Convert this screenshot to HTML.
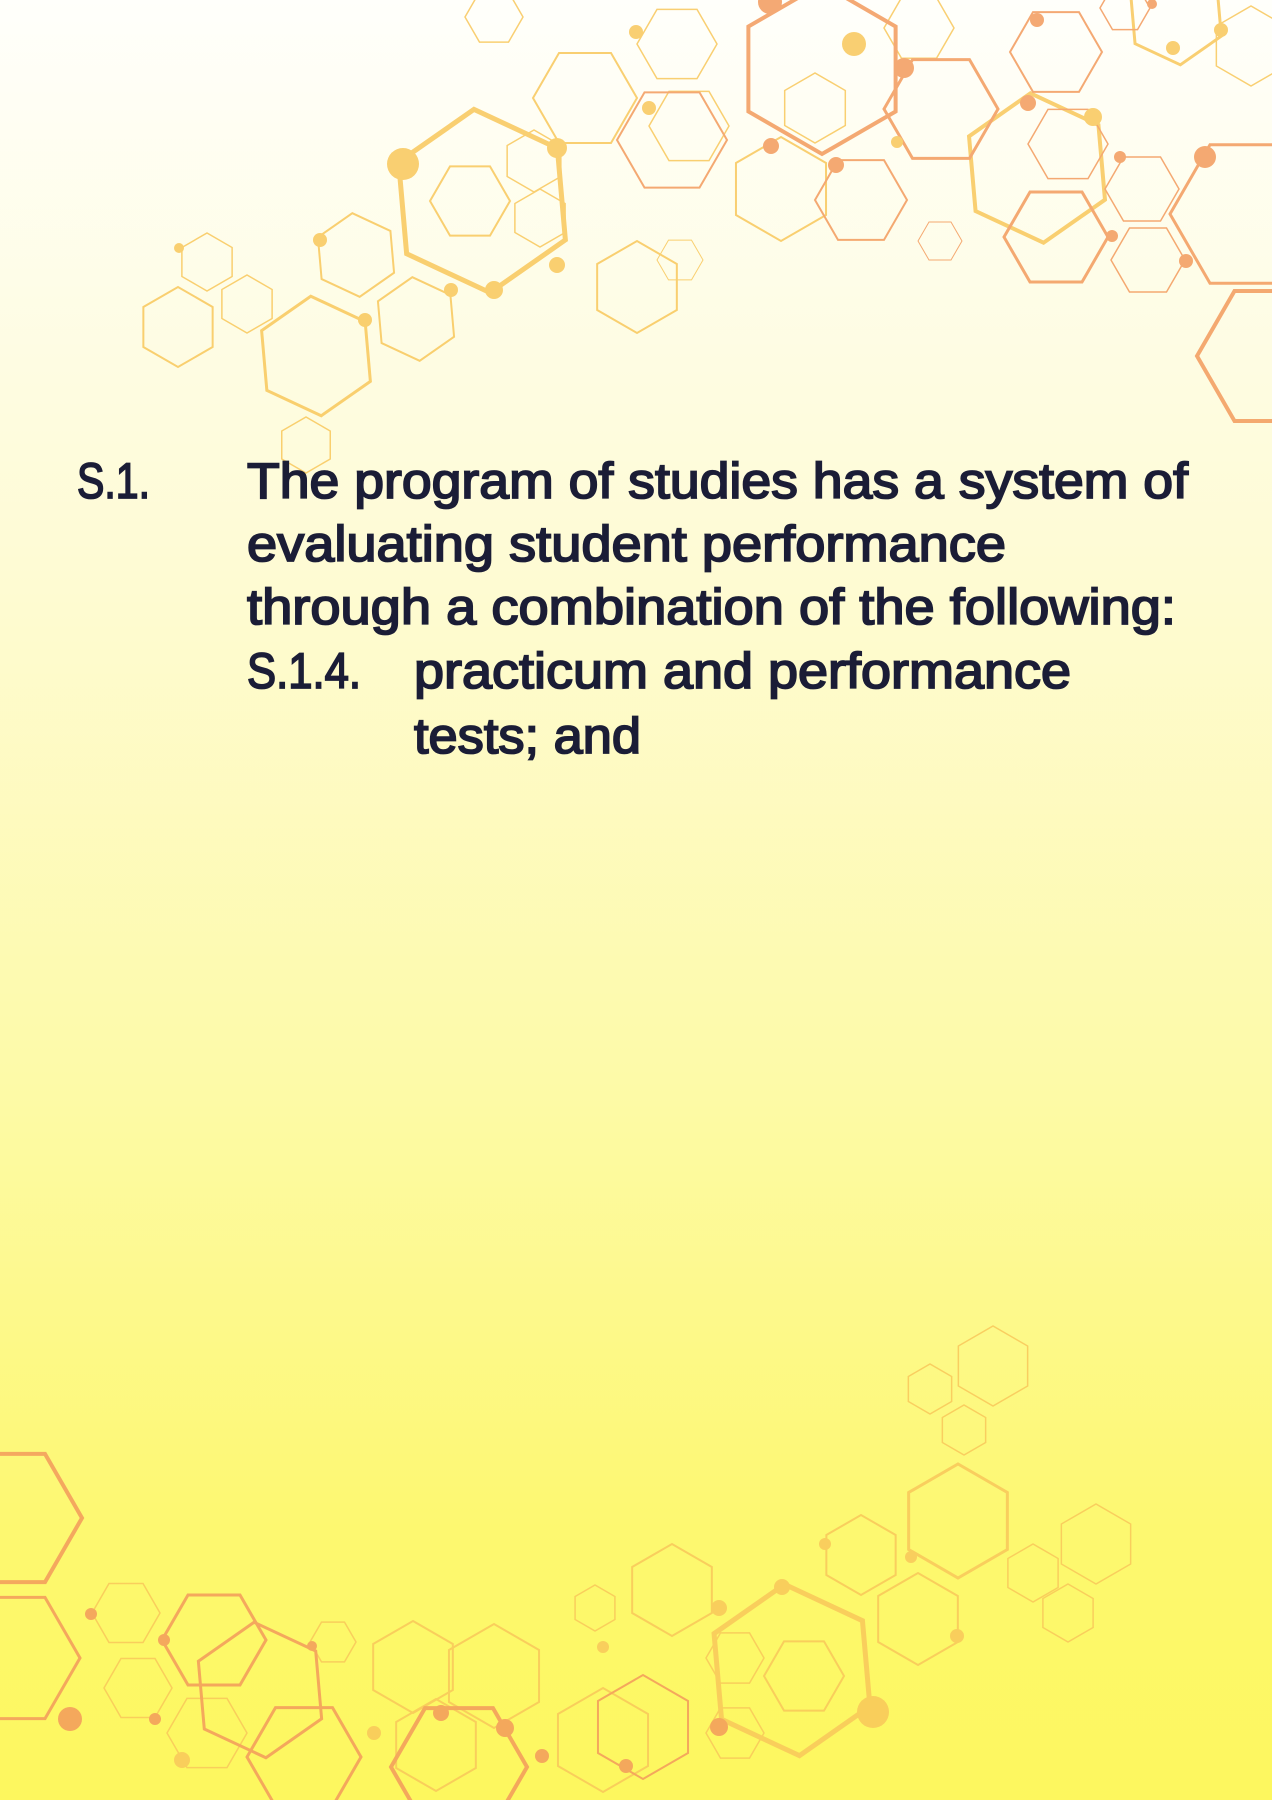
<!DOCTYPE html>
<html><head><meta charset="utf-8"><style>
html,body{margin:0;padding:0}
body{width:1272px;height:1800px;overflow:hidden;background:linear-gradient(180deg,#fffffb 0%,#fefbd6 30%,#fdfaa8 60%,#fdf870 85%,#fdf75e 100%);position:relative}
svg{position:absolute;left:0;top:0}
</style></head><body>
<svg width="1272" height="1800" viewBox="0 0 1272 1800">
<defs><polygon id="h" fill="none" vector-effect="non-scaling-stroke" points="1,0 .5,.866 -.5,.866 -1,0 -.5,-.866 .5,-.866"/></defs>
<g fill="none" opacity="0.85">
<g stroke="#f8c75a">
<use href="#h" transform="translate(482,201) rotate(25) scale(92)" stroke-width="5"/>
<use href="#h" transform="translate(470,201) scale(40)" stroke-width="2"/>
<use href="#h" transform="translate(637,287) rotate(30) scale(46)" stroke-width="2"/>
<use href="#h" transform="translate(356,255) rotate(25) scale(42)" stroke-width="2"/>
<use href="#h" transform="translate(316,356) rotate(25) scale(60)" stroke-width="3"/>
<use href="#h" transform="translate(416,319) rotate(25) scale(42)" stroke-width="2"/>
<use href="#h" transform="translate(207,262) rotate(30) scale(29)" stroke-width="1.5"/>
<use href="#h" transform="translate(247,304) rotate(30) scale(29)" stroke-width="1.5"/>
<use href="#h" transform="translate(178,327) rotate(30) scale(40)" stroke-width="2"/>
<use href="#h" transform="translate(534,161) rotate(30) scale(31)" stroke-width="1.5"/>
<use href="#h" transform="translate(540,218) rotate(30) scale(29)" stroke-width="1.5"/>
<use href="#h" transform="translate(585,98) scale(52)" stroke-width="2"/>
<use href="#h" transform="translate(677,44) scale(40)" stroke-width="1.5"/>
<use href="#h" transform="translate(689,126) scale(40)" stroke-width="1.5"/>
<use href="#h" transform="translate(815,108) rotate(30) scale(35)" stroke-width="1.5"/>
<use href="#h" transform="translate(781,189) rotate(30) scale(52)" stroke-width="2"/>
<use href="#h" transform="translate(919,28) scale(35)" stroke-width="1.5"/>
<use href="#h" transform="translate(1037,168) rotate(25) scale(75)" stroke-width="4"/>
<use href="#h" transform="translate(1176,15) rotate(25) scale(50)" stroke-width="3"/>
<use href="#h" transform="translate(1251,46) rotate(30) scale(40)" stroke-width="1.5"/>
<use href="#h" transform="translate(494,17) scale(29)" stroke-width="1.5"/>
<use href="#h" transform="translate(680,260) scale(23)" stroke-width="1"/>
<use href="#h" transform="translate(306,445) rotate(30) scale(28)" stroke-width="1.5"/>
<use href="#h" transform="translate(792,1670) rotate(25) scale(86)" stroke-width="5"/>
<use href="#h" transform="translate(804,1676) scale(40)" stroke-width="2"/>
<use href="#h" transform="translate(735,1658) scale(29)" stroke-width="1.5"/>
<use href="#h" transform="translate(735,1733) scale(29)" stroke-width="1.5"/>
<use href="#h" transform="translate(672,1590) rotate(30) scale(46)" stroke-width="2"/>
<use href="#h" transform="translate(595,1608) rotate(30) scale(23)" stroke-width="1.5"/>
<use href="#h" transform="translate(861,1555) rotate(30) scale(40)" stroke-width="2"/>
<use href="#h" transform="translate(918,1619) rotate(30) scale(46)" stroke-width="2"/>
<use href="#h" transform="translate(958,1521) rotate(30) scale(57)" stroke-width="3"/>
<use href="#h" transform="translate(930,1389) rotate(30) scale(25)" stroke-width="1.5"/>
<use href="#h" transform="translate(993,1366) rotate(30) scale(40)" stroke-width="1.5"/>
<use href="#h" transform="translate(964,1430) rotate(30) scale(25)" stroke-width="1.5"/>
<use href="#h" transform="translate(1033,1573) rotate(30) scale(29)" stroke-width="1.5"/>
<use href="#h" transform="translate(1096,1544) rotate(30) scale(40)" stroke-width="1.5"/>
<use href="#h" transform="translate(1068,1613) rotate(30) scale(29)" stroke-width="1.5"/>
<use href="#h" transform="translate(413,1667) rotate(30) scale(46)" stroke-width="2"/>
<use href="#h" transform="translate(494,1676) rotate(30) scale(52)" stroke-width="2"/>
<use href="#h" transform="translate(436,1745) rotate(30) scale(46)" stroke-width="2"/>
<use href="#h" transform="translate(126,1613) scale(34)" stroke-width="1.5"/>
<use href="#h" transform="translate(138,1688) scale(34)" stroke-width="1.5"/>
<use href="#h" transform="translate(207,1733) scale(40)" stroke-width="1.5"/>
<use href="#h" transform="translate(333,1642) scale(23)" stroke-width="1.5"/>
<use href="#h" transform="translate(603,1740) rotate(30) scale(52)" stroke-width="2"/>
</g>
<g stroke="#f39a5c">
<use href="#h" transform="translate(822,69) rotate(30) scale(85)" stroke-width="4"/>
<use href="#h" transform="translate(861,200) scale(46)" stroke-width="2"/>
<use href="#h" transform="translate(941,109) scale(57)" stroke-width="3"/>
<use href="#h" transform="translate(1056,237) scale(52)" stroke-width="3"/>
<use href="#h" transform="translate(1056,52) scale(46)" stroke-width="2"/>
<use href="#h" transform="translate(1068,144) scale(40)" stroke-width="1.5"/>
<use href="#h" transform="translate(1142,189) scale(37)" stroke-width="1.5"/>
<use href="#h" transform="translate(1148,260) scale(37)" stroke-width="1.5"/>
<use href="#h" transform="translate(1250,214) scale(80)" stroke-width="3"/>
<use href="#h" transform="translate(1272,356) scale(75)" stroke-width="4"/>
<use href="#h" transform="translate(940,241) scale(22)" stroke-width="1"/>
<use href="#h" transform="translate(672,140) scale(55)" stroke-width="2"/>
<use href="#h" transform="translate(1125,8) scale(25)" stroke-width="1.5"/>
<use href="#h" transform="translate(8,1518) scale(74)" stroke-width="4"/>
<use href="#h" transform="translate(10,1658) scale(70)" stroke-width="3"/>
<use href="#h" transform="translate(214,1640) scale(52)" stroke-width="3"/>
<use href="#h" transform="translate(260,1690) rotate(25) scale(68)" stroke-width="3"/>
<use href="#h" transform="translate(304,1757) scale(57)" stroke-width="3"/>
<use href="#h" transform="translate(459,1767) scale(68)" stroke-width="4"/>
<use href="#h" transform="translate(643,1727) rotate(30) scale(52)" stroke-width="2"/>
</g>
<g fill="#f8c75a">
<circle cx="403" cy="164" r="16"/><circle cx="557" cy="148" r="10"/><circle cx="494" cy="290" r="9"/><circle cx="451" cy="290" r="7"/><circle cx="320" cy="240" r="7"/><circle cx="365" cy="320" r="7"/><circle cx="557" cy="265" r="8"/><circle cx="179" cy="248" r="5"/><circle cx="854" cy="44" r="12"/><circle cx="1093" cy="117" r="9"/><circle cx="1221" cy="30" r="7"/><circle cx="1173" cy="48" r="7"/><circle cx="649" cy="108" r="7"/><circle cx="897" cy="142" r="6"/><circle cx="636" cy="32" r="7"/>
<circle cx="873" cy="1712" r="16"/><circle cx="782" cy="1587" r="8"/><circle cx="719" cy="1608" r="8"/><circle cx="911" cy="1557" r="6"/><circle cx="957" cy="1636" r="7"/><circle cx="374" cy="1733" r="7"/><circle cx="182" cy="1760" r="8"/><circle cx="603" cy="1647" r="6"/><circle cx="825" cy="1544" r="6"/>
</g>
<g fill="#f39a5c">
<circle cx="904" cy="68" r="10"/><circle cx="771" cy="146" r="8"/><circle cx="836" cy="165" r="8"/><circle cx="1028" cy="103" r="8"/><circle cx="1037" cy="20" r="7"/><circle cx="1205" cy="157" r="11"/><circle cx="1186" cy="261" r="7"/><circle cx="1112" cy="236" r="6"/><circle cx="1120" cy="157" r="6"/><circle cx="770" cy="2" r="12"/><circle cx="1152" cy="4" r="5"/>
<circle cx="70" cy="1719" r="12"/><circle cx="505" cy="1728" r="9"/><circle cx="441" cy="1713" r="8"/><circle cx="719" cy="1727" r="9"/><circle cx="626" cy="1766" r="7"/><circle cx="542" cy="1756" r="7"/><circle cx="91" cy="1614" r="6"/><circle cx="164" cy="1640" r="6"/><circle cx="155" cy="1719" r="6"/><circle cx="312" cy="1646" r="5"/>
</g>
</g>
<g fill="#1b1d36" stroke="#1b1d36" stroke-width="1.8" font-family="'Liberation Sans Narrow','Liberation Sans',sans-serif" font-size="50">
<text x="77" y="498" textLength="73" lengthAdjust="spacingAndGlyphs">S.1.</text>
<text x="247" y="498" textLength="941" lengthAdjust="spacingAndGlyphs">The program of studies has a system of</text>
<text x="247" y="561" textLength="759" lengthAdjust="spacingAndGlyphs">evaluating student performance</text>
<text x="247" y="624" textLength="929" lengthAdjust="spacingAndGlyphs">through a combination of the following:</text>
<text x="247" y="688" textLength="114" lengthAdjust="spacingAndGlyphs">S.1.4.</text>
<text x="414" y="688" textLength="657" lengthAdjust="spacingAndGlyphs">practicum and performance</text>
<text x="414" y="753" textLength="227" lengthAdjust="spacingAndGlyphs">tests; and</text>
</g>
</svg>
</body></html>
